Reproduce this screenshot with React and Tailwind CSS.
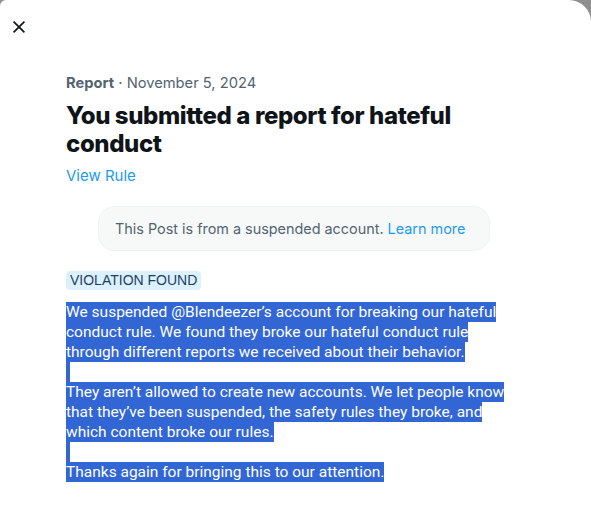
import React from 'react';

const paragraph = [
  ['We suspended @Blendeezer’s account for breaking our hateful', 'conduct rule. We found they broke our hateful conduct rule', 'through different reports we received about their behavior.'],
  ['They aren’t allowed to create new accounts. We let people know', 'that they’ve been suspended, the safety rules they broke, and', 'which content broke our rules.'],
  ['Thanks again for bringing this to our attention.'],
];

function CloseIcon() {
  return (
    <svg viewBox="0 0 24 24" className="w-[20px] h-[20px]" fill="none" stroke="#0f1419" strokeWidth="2">
      <path d="M5.5 5.5l13 13M18.5 5.5l-13 13" />
    </svg>
  );
}

export default function App() {
  return (
    <div className="w-[591px] h-[532px] bg-[#8f8f8f] overflow-hidden">
      <div className="w-full h-full bg-white rounded-tr-[22px] rounded-tl-[6px] font-['Inter',sans-serif] text-[#0f1419]">
        {/* Header */}
        <div className="h-[53px] flex items-center pl-[9px]">
          <button className="w-[20px] h-[20px] flex items-center justify-center">
            <CloseIcon />
          </button>
        </div>

        {/* Content */}
        <div className="pl-[66px] pr-[40px]">
          <div className="text-[14.7px] leading-[20px] text-[#536471] mt-[20px]">
            <span className="font-bold">Report</span> · November 5, 2024
          </div>
          <h1 className="text-[24px] leading-[28px] font-extrabold mt-[9px] tracking-[-0.4px] w-[420px]">
            You submitted a report for hateful conduct
          </h1>
          <div className="text-[15px] leading-[20px] text-[#1d9bf0] mt-[8px]">View Rule</div>

          <div className="mt-[20px] ml-[32px] w-[392px] h-[45px] rounded-[16px] bg-[#f7f9f9] border border-[#eff3f4] flex items-center pl-[16px] text-[14.4px] text-[#536471]">
            This Post is from a suspended account.&nbsp;<span className="text-[#1d9bf0]">Learn more</span>
          </div>

          <div className="mt-[20px] inline-flex items-center h-[19px] px-[4px] rounded-[4px] bg-[#ddf1fd] text-[14px] text-[#1d3f66] font-['Liberation_Sans',sans-serif]">
            VIOLATION FOUND
          </div>

          <div className="mt-[11px] font-['Roboto',sans-serif] text-[15.5px] leading-[20px] text-white">
            {paragraph.map((block, bi) => (
              <React.Fragment key={bi}>
                {bi > 0 && <div className="h-[20px] w-[4px] bg-[#3166d4]" />}
                {block.map((line, li) => (
                  <div key={li} className="w-fit h-[20px] bg-[#3166d4] whitespace-nowrap">
                    {line}
                  </div>
                ))}
              </React.Fragment>
            ))}
          </div>
        </div>
      </div>
    </div>
  );
}
